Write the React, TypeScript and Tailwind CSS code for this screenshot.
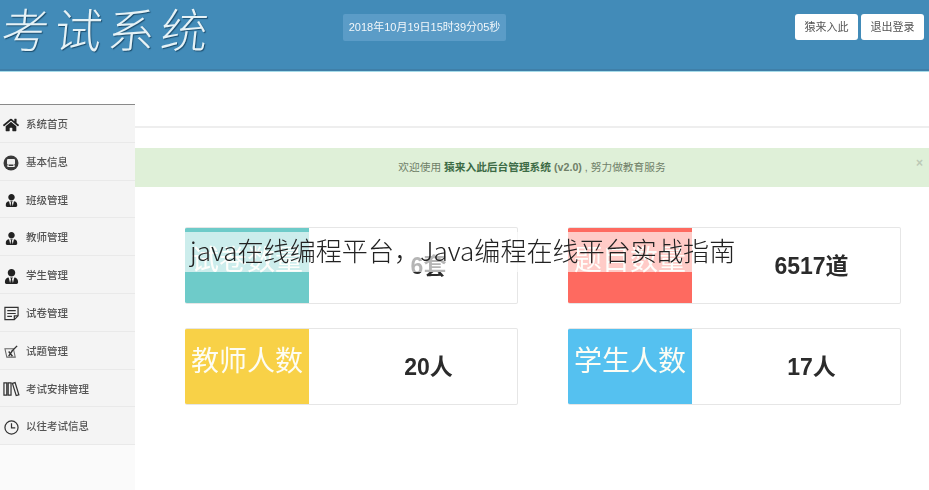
import React from 'react';
import { FaHome, FaUserTie } from 'react-icons/fa';

const cjk = "font-['Liberation_Sans','Noto_Sans_CJK_SC',sans-serif]";

function BusIcon() {
  return (
    <svg viewBox="0 0 16 16" className="h-[16px] w-[16px]">
      <circle cx="8" cy="8" r="7.5" fill="#3a3a3a" />
      <rect x="4" y="4" width="8" height="5.5" rx="1" fill="#f0f0f0" />
      <path d="M4.5 11.5h7M5.5 9.5l-1 2M10.5 9.5l1 2" stroke="#f0f0f0" strokeWidth="1.2" />
    </svg>
  );
}

function PaperIcon() {
  return (
    <svg viewBox="0 0 16 16" className="h-[15px] w-[15px]" fill="none" stroke="#333" strokeWidth="1.3">
      <path d="M1 1.5h14v9l-4 4H1z" />
      <path d="M11 14.5v-4h4M3.5 5h9M3.5 8h9M3.5 11h5" />
    </svg>
  );
}

function QuestionIcon() {
  return (
    <svg viewBox="0 0 16 16" className="h-[15px] w-[15px]" fill="none" stroke="#666" strokeWidth="1.1">
      <path d="M1 5h9l2 9H3z" />
      <path d="M5 8l4 5M9 7l-4 6M8 8l6-6" stroke="#333" strokeWidth="1.5" />
    </svg>
  );
}

function BooksIcon() {
  return (
    <svg viewBox="0 0 18 16" className="h-[16px] w-[17px]" fill="none" stroke="#333" strokeWidth="1.3">
      <path d="M1 1.5h3v13H1zM5.5 1.5h3v13h-3zM10 2l2.8-.8 4 13-2.8.8z" />
    </svg>
  );
}

function ClockIcon() {
  return (
    <svg viewBox="0 0 16 16" className="h-[15px] w-[15px]" fill="none" stroke="#333" strokeWidth="1.3">
      <circle cx="8" cy="8" r="7" />
      <path d="M8 3.5V8.5h4" />
    </svg>
  );
}

const tieIcon = <FaUserTie className="h-[13px] w-[13px] text-[#222]" />;

const navItems = [
  { label: '系统首页', icon: <FaHome className="h-[16px] w-[16px] text-[#222]" /> },
  { label: '基本信息', icon: <BusIcon /> },
  { label: '班级管理', icon: tieIcon },
  { label: '教师管理', icon: tieIcon },
  { label: '学生管理', icon: <FaUserTie className="h-[15px] w-[15px] text-[#222]" /> },
  { label: '试卷管理', icon: <PaperIcon /> },
  { label: '试题管理', icon: <QuestionIcon /> },
  { label: '考试安排管理', icon: <BooksIcon /> },
  { label: '以往考试信息', icon: <ClockIcon /> },
];

const stats = [
  { label: '试卷数量', value: '6套', color: 'bg-[#6ecbc9]' },
  { label: '题目数量', value: '6517道', color: 'bg-[#fe6a60]' },
  { label: '教师人数', value: '20人', color: 'bg-[#f8d147]' },
  { label: '学生人数', value: '17人', color: 'bg-[#55c1f0]' },
];

export default function App() {
  return (
    <div className={`relative h-[490px] w-[929px] overflow-hidden bg-white ${cjk}`}>
      <div className="blur-[0.4px]">
        {/* Header */}
        <div className="flex h-[71px] items-start justify-between border-b-2 border-[#3f7fa8] bg-[#428bb8] shadow-[0_1px_0_#a5dbe9]">
          <div className="flex items-start">
            <div className="w-[343px] pt-[3px] pl-[2px] text-[47px] leading-[58px] font-extralight tracking-[6px] text-[#e6f2f6] [text-shadow:1px_1px_1px_#1d4f70]">
              <span className="inline-block -skew-x-6">考试系统</span>
            </div>
            <div className="mt-[14px] flex h-[27px] w-[163px] items-center justify-center rounded-[2px] bg-[#5b9cc7] text-[11px] whitespace-nowrap text-[#f2f7fa]">
              2018年10月19日15时39分05秒
            </div>
          </div>
          <div className="mt-[14px] mr-[5px] flex gap-[3px]">
            <div className="flex h-[26px] w-[63px] items-center justify-center rounded-[3px] bg-white text-[11px] text-[#555]">猿来入此</div>
            <div className="flex h-[26px] w-[63px] items-center justify-center rounded-[3px] bg-white text-[11px] text-[#555]">退出登录</div>
          </div>
        </div>

        <div className="flex h-[419px]">
          {/* Sidebar */}
          <div className="flex w-[135px] flex-col pt-[33px]">
            <div className="border-t-[1.5px] border-[#8a8a8a]">
              {navItems.map((item) => (
                <div
                  key={item.label}
                  className="flex h-[37.8px] items-center border-b border-[#e9e9e9] bg-[#f4f4f4] pt-[3px] text-[10.5px] font-medium text-[#555]"
                >
                  <span className="flex w-[26px] shrink-0 items-center justify-center pr-[4px]">{item.icon}</span>
                  {item.label}
                </div>
              ))}
            </div>
            <div className="flex-1 bg-[#fafafa]" />
          </div>

          {/* Content */}
          <div className="flex-1">
            <div className="h-[57px] border-b-2 border-[#eeeeee]" />
            <div className="relative mt-[20px] flex h-[39px] items-center justify-center bg-[#dff0d8] text-[10.7px] text-[#6f7f68]">
              <span>
                欢迎使用 <b className="font-bold text-[#3c6b45]">猿来入此后台管理系统</b> <b className="font-semibold">(v2.0)</b> , 努力做教育服务
              </span>
              <span className="absolute top-[6px] right-[6px] text-[12px] font-bold text-[#bcc9b6]">×</span>
            </div>
            <div className="mt-[40px] ml-[50px] grid w-[716px] grid-cols-2 gap-x-[50px] gap-y-[24px]">
              {stats.map((s) => (
                <div key={s.label} className="flex h-[77px] overflow-hidden rounded-[2px] border border-l-0 border-[#e6e6e6] bg-white">
                  <div className={`w-[124px] shrink-0 pt-[13px] text-center text-[28px] leading-[40px] whitespace-nowrap text-[#fdfdf4] ${s.color}`}>
                    {s.label}
                  </div>
                  <div className="flex flex-1 items-center justify-center pt-[2px] pl-[31px] text-[23px] font-bold text-[#2b2b2b]">
                    {s.value}
                  </div>
                </div>
              ))}
            </div>
          </div>
        </div>
      </div>

      {/* Article title laid over the screenshot */}
      <div className="absolute top-[232px] left-[180px] flex h-[40px] w-[560px] items-center bg-white/65 pb-[2px] pl-[10px] font-['Noto_Sans_CJK_SC',sans-serif] text-[26.1px] font-light whitespace-nowrap text-[#222]">
        java在线编程平台，Java编程在线平台实战指南
      </div>
    </div>
  );
}
